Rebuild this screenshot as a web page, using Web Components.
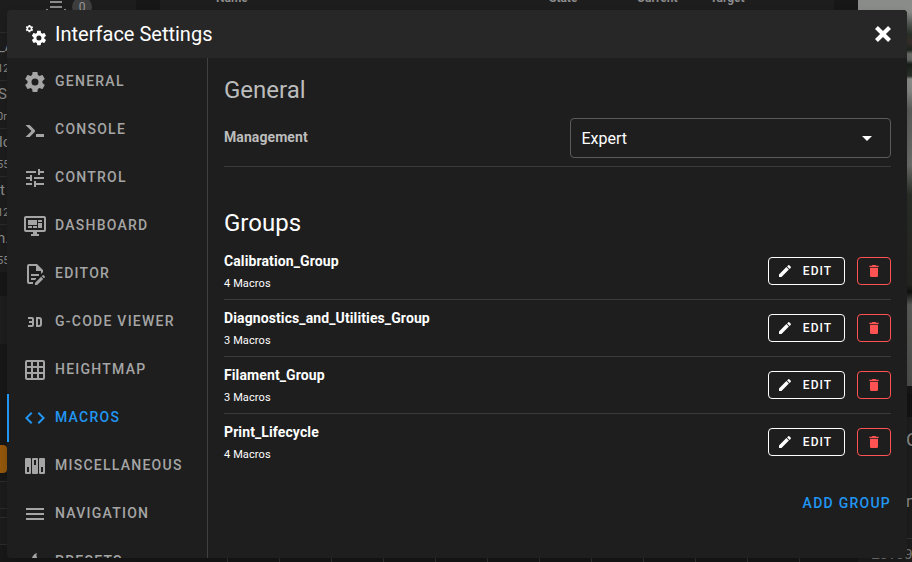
<!DOCTYPE html>
<html lang="en"><head><meta charset="utf-8"><title>Interface Settings</title>
<style>html,body{margin:0;width:912px;height:562px;overflow:hidden;background:#171717;font-family:Roboto,sans-serif}</style></head>
<body><settings-app></settings-app>
<script>
const ICONS={
cog:'M12,15.5A3.5,3.5 0 0,1 8.5,12A3.5,3.5 0 0,1 12,8.5A3.5,3.5 0 0,1 15.5,12A3.5,3.5 0 0,1 12,15.5M19.43,12.97C19.47,12.65 19.5,12.33 19.5,12C19.5,11.67 19.47,11.34 19.43,11L21.54,9.37C21.73,9.22 21.78,8.95 21.66,8.73L19.66,5.27C19.54,5.05 19.27,4.96 19.05,5.05L16.56,6.05C16.04,5.66 15.5,5.32 14.87,5.07L14.5,2.42C14.46,2.18 14.25,2 14,2H10C9.75,2 9.54,2.18 9.5,2.42L9.13,5.07C8.5,5.32 7.96,5.66 7.44,6.05L4.95,5.05C4.73,4.96 4.46,5.05 4.34,5.27L2.34,8.73C2.21,8.95 2.27,9.22 2.46,9.37L4.57,11C4.53,11.34 4.5,11.67 4.5,12C4.5,12.33 4.53,12.65 4.57,12.97L2.46,14.63C2.27,14.78 2.21,15.05 2.34,15.27L4.34,18.73C4.46,18.95 4.73,19.03 4.95,18.95L7.44,17.94C7.96,18.34 8.5,18.68 9.13,18.93L9.5,21.58C9.54,21.82 9.75,22 10,22H14C14.25,22 14.46,21.82 14.5,21.58L14.87,18.93C15.5,18.67 16.04,18.34 16.56,17.94L19.05,18.95C19.27,19.03 19.54,18.95 19.66,18.73L21.66,15.27C21.78,15.05 21.73,14.78 21.54,14.63L19.43,12.97Z',
console:'M13,19V16H21V19H13M8.5,13L2.47,7H6.71L11.67,11.95C12.25,12.54 12.25,13.5 11.67,14.07L6.74,19H2.5L8.5,13Z',
tune:'M3,17V19H9V17H3M3,5V7H13V5H3M13,21V19H21V17H13V15H11V21H13M7,9V11H3V13H7V15H9V9H7M21,13V11H11V13H21M15,9H17V7H21V5H17V3H15V9Z',
dashboard:'M21,16V4H3V16H21M21,2A2,2 0 0,1 23,4V16A2,2 0 0,1 21,18H14V20H16V22H8V20H10V18H3C1.89,18 1,17.1 1,16V4C1,2.89 1.89,2 3,2H21M5,6H14V11H5V6M15,6H19V8H15V6M19,9V14H15V9H19M5,12H9V14H5V12M10,12H14V14H10V12Z',
editor:'M8,12H16V14H8V12M10,20H6V4H13V9H18V12.1L20,10.1V8L14,2H6A2,2 0 0,0 4,4V20A2,2 0 0,0 6,22H10V20M8,18H12.1L13,17.1V16H8V18M20.2,13C20.3,13 20.5,13.1 20.6,13.2L21.9,14.5C22.1,14.7 22.1,15.1 21.9,15.3L20.9,16.3L18.8,14.2L19.8,13.2C19.9,13.1 20,13 20.2,13M20.2,16.9L14.1,23H12V20.9L18.1,14.8L20.2,16.9Z',
viewer:'M5,7H9A2,2 0 0,1 11,9V15A2,2 0 0,1 9,17H5V15H9V13H6V11H9V9H5V7M13,7H16A3,3 0 0,1 19,10V14A3,3 0 0,1 16,17H13V7M16,15A1,1 0 0,0 17,14V10A1,1 0 0,0 16,9H15V15H16Z',
grid:'M10,4V8H14V4H10M16,4V8H20V4H16M16,10V14H20V10H16M16,16V20H20V16H16M14,20V16H10V20H14M8,20V16H4V20H8M8,14V10H4V14H8M8,8V4H4V8H8M10,14H14V10H10V14M4,2H20A2,2 0 0,1 22,4V20A2,2 0 0,1 20,22H4C2.92,22 2,21.1 2,20V4A2,2 0 0,1 4,2Z',
code:'M14.6,16.6L19.2,12L14.6,7.4L16,6L22,12L16,18L14.6,16.6M9.4,16.6L4.8,12L9.4,7.4L8,6L2,12L8,18L9.4,16.6Z',
dip:'M3,4H7A1,1 0 0,1 8,5V19A1,1 0 0,1 7,20H3A1,1 0 0,1 2,19V5A1,1 0 0,1 3,4M4,13V18H6V13ZM10,4H14A1,1 0 0,1 15,5V19A1,1 0 0,1 14,20H10A1,1 0 0,1 9,19V5A1,1 0 0,1 10,4M11,6V11H13V6ZM17,4H21A1,1 0 0,1 22,5V19A1,1 0 0,1 21,20H17A1,1 0 0,1 16,19V5A1,1 0 0,1 17,4M18,13V18H20V13Z',
menu:'M3,6H21V8H3V6M3,11H21V13H3V11M3,16H21V18H3V16Z',
fire:'M17.66 11.2C17.43 10.9 17.15 10.64 16.89 10.38C16.22 9.78 15.46 9.35 14.82 8.72C13.33 7.26 13 4.85 13.95 3C13 3.23 12.17 3.75 11.46 4.32C8.87 6.4 7.85 10.07 9.07 13.22C6 17 10 21 14 20C18 19 19 14 17.66 11.2Z',
close:'M20 6.91L17.09 4L12 9.09L6.91 4L4 6.91L9.09 12L4 17.09L6.91 20L12 14.91L17.09 20L20 17.09L14.91 12L20 6.91Z',
pencil:'M20.71,7.04C21.1,6.65 21.1,6 20.71,5.63L18.37,3.29C18,2.9 17.35,2.9 16.96,3.29L15.12,5.12L18.87,8.87M3,17.25V21H6.75L17.81,9.93L14.06,6.18L3,17.25Z',
trash:'M19,4H15.5L14.5,3H9.5L8.5,4H5V6H19M6,19A2,2 0 0,0 8,21H16A2,2 0 0,0 18,19V7H6V19Z',
down:'M7,10L12,15L17,10H7Z',
list:'M7,6H19V8H7V6M7,11H19V13H7V11M7,15H19V17H7V15M3,14H5V16H3ZM21,14H23V16H21Z'};
function define(name,html){customElements.define(name,class extends HTMLElement{
 connectedCallback(){if(this.shadowRoot)return;this.attachShadow({mode:'open'}).innerHTML=typeof html==='function'?html(this):html;}});}

define('ui-icon',e=>{
 const s=e.getAttribute('size')||24,n=e.getAttribute('name');
 const body=n==='cogs'?`<g transform="translate(2 2.2) scale(.37)"><path d="${ICONS.cog}"/></g><g transform="translate(7.3 7.3) scale(.72)"><path d="${ICONS.cog}"/></g>`:`<path fill-rule="evenodd" d="${ICONS[n]}"/>`;
 return `<style>:host{display:block;flex:none;width:${s}px;height:${s}px}svg{display:block}</style><svg width="${s}" height="${s}" viewBox="0 0 24 24" fill="currentColor">${body}</svg>`;});

define('nav-item',e=>`<style>:host{display:flex;align-items:center;box-sizing:border-box;height:48px;padding-left:16px;gap:8px;color:#a5a5a5;font:500 14px/20px Roboto,sans-serif;letter-spacing:1.25px;white-space:nowrap}
:host([active]){color:#2196f3;box-shadow:inset 2px 0 #2196f3}span{margin-top:-2px}</style><ui-icon name="${e.getAttribute('icon')}"></ui-icon><span><slot></slot></span>`);

define('outline-button',`<style>:host{display:flex;box-sizing:border-box;align-items:center;justify-content:center;height:28px;padding:0 12px 0 9px;border:1px solid;border-radius:4px;gap:9px;font:500 12px/16px Roboto,sans-serif;letter-spacing:1.07px;color:#fff}:host([danger]){width:34px;padding:0;color:#ff5252}</style><slot></slot>`);

define('group-row',e=>`<style>:host{display:flex;box-sizing:border-box;height:57px;align-items:center;color:#fff;border-bottom:1px solid #3a3a3a}:host([last]){border-color:transparent}
.t{flex:1;display:flex;flex-direction:column;gap:5px}b{font:700 14px/20px Roboto;letter-spacing:.11px}small{font:400 11px/16px Roboto;letter-spacing:.11px}.a{display:flex;gap:12px}outline-button[e]{width:77px;box-sizing:border-box}ui-icon[name=pencil]{margin:0 1px 0 -1px}</style>
<div class="t"><b>${e.getAttribute('name')}</b><small><slot></slot></small></div><div class="a"><outline-button e><ui-icon name="pencil" size="16"></ui-icon><span>EDIT</span></outline-button><outline-button danger><ui-icon name="trash" size="16"></ui-icon></outline-button></div>`);

define('select-box',`<style>:host{display:flex;box-sizing:border-box;width:321px;height:40px;border:1px solid #5b5b5b;border-radius:4px;align-items:center;justify-content:space-between;padding:0 11px 0 10.5px;color:#fff;font:400 16px/20px Roboto;}span{padding-top:2px}</style><span><slot></slot></span><ui-icon name="down"></ui-icon>`);

define('page-backdrop',()=>{
 const rows=[['_A','12',-2],['S','0r',-2],['lo','55',-1],['t','12',0],['n.','55',-3]];
 return `<style>:host{display:grid;grid-template-columns:136px 674px 54px;column-gap:24px;width:912px;height:562px;overflow:hidden;color:#8c8c8c}
 .l,.c,.r{display:flex;flex-direction:column;overflow:hidden;height:562px}
 .top{height:32px;flex:none;background:#1d1d1d;display:flex;padding-left:43px;gap:2px;box-sizing:border-box}
 .top ui-icon{margin-top:-5px}.badge{width:20px;height:20px;border-radius:50%;background:#3e3e3e;color:#999;font:12px/20px Roboto;text-align:center;margin:-3px 0 0 3px}
 .row{height:48px;box-sizing:border-box;border-top:1px solid #2c2c2c;background:#1d1d1d;display:flex;flex-direction:column;white-space:nowrap;flex:none}
 .row b{font:400 15px/27px Roboto}.row i{font:normal 11px/18px Roboto}.lower{margin-top:24px;flex:1;background:linear-gradient(#1e1e1e 48px,#181818 48px)}
 .warn{margin-top:149px;height:28px;width:7px;background:#97590c;border-radius:0 4px 4px 0}
 .ticks{margin-top:8px;height:64px;background:linear-gradient(#2c2c2c,#2c2c2c) 0 0/100% 1px no-repeat,linear-gradient(#2c2c2c,#2c2c2c) 0 27px/100% 1px no-repeat,linear-gradient(#2c2c2c,#2c2c2c) 0 36px/100% 1px no-repeat,linear-gradient(#2c2c2c,#2c2c2c) 0 63px/100% 1px no-repeat,#1c1c1c}
 .head{display:grid;grid-template-columns:333px 88px 73px 1fr;padding-left:56px;height:558px;background:#1d1d1d;font:700 12px/14px Roboto;box-sizing:border-box}.head span{margin-top:-9px}
 .bottom{height:4px;background:repeating-linear-gradient(90deg,#171717 0 51px,#333 51px 52px) 16px 0}
 .cam{height:386px;flex:none;background:linear-gradient(#8a8c89 0,#8a8c89 12px,#555a55 24px,#2a332b 34px,#3a2f2a 42px,#1d271f 50px,#6f726e 54px,#666966 60px,#1a211b 64px,#2b332c 76px,#8f918e 79px,#8a8c89 90px,#5c5f5b 110px,#6c6f6b 165px,#2a2f28 195px,#242621 285px,#101210 292px,#5c5e5a 305px,#4d504c)}
 .gap{height:7px;flex:none}.info{height:154px;background:linear-gradient(#131313 24px,#1d1d1d 24px 106px,#333 106px 107px,#1d1d1d 107px 145px,#333 145px 146px,#1d1d1d 146px);flex:none;display:flex;flex-direction:column;padding-left:48px;font:19px/28px Roboto;box-sizing:border-box;padding-top:33px;gap:33px}.info i{font:normal 17px/28px Roboto}.time{padding-left:13px;font:15px/18px 'Liberation Mono',monospace;letter-spacing:-.8px;color:#777;background:#1d1d1d;flex:1}
 </style><div class="l"><div class="top"><ui-icon name="list"></ui-icon><div class="badge">0</div></div>
 ${rows.map(r=>`<div class="row"><b style="text-indent:${r[2]}px">${r[0]}</b><i style="text-indent:-3px">${r[1]}</i></div>`).join('')}
 <div class="lower"><div class="warn"></div><div class="ticks"></div></div></div>
 <div class="c"><div class="head"><span>Name</span><span>State</span><span>Current</span><span>Target</span></div><div class="bottom"></div></div>
 <div class="r"><div class="cam"></div><div class="gap"></div><div class="info"><span>C</span><i>n</i></div><div class="time">10:09</div></div>`;});

define('settings-dialog',`<style>:host{position:absolute;left:7px;top:10px;width:900px;height:548px;display:flex;flex-direction:column;border-radius:4px;overflow:hidden;background:#1e1e1e;box-shadow:0 6px 12px #0003;color:#fff}
header{height:48px;flex:none;background:#272727;display:flex;align-items:center;padding:0 12px 0 16px;gap:8px;box-sizing:border-box}h1{flex:1;margin:0;font:400 20px/32px Roboto}header ui-icon[name=cogs]{margin-left:-.5px;margin-right:.5px}
main{display:flex;flex:1;min-height:0}nav{width:200px;flex:none;border-right:1px solid #404040;overflow:hidden}
section{flex:1;padding:16px 16px 0;display:flex;flex-direction:column}h2{font:400 24px/32px Roboto;margin:0}h2.dim,.set label{color:#bcbcbc}
.set{display:flex;align-items:center;justify-content:space-between;height:61px;box-sizing:border-box;padding-top:4px;border-bottom:1px solid #3a3a3a}.set label{font:700 14px/20px Roboto;margin-top:-2px;letter-spacing:.08px}
.groups{margin-top:40px}.rows{margin-top:4px}.add{align-self:flex-end;margin-top:22px;font:500 14px/20px Roboto;letter-spacing:1.25px;color:#2196f3;white-space:nowrap}</style>
<header><ui-icon name="cogs"></ui-icon><h1>Interface Settings</h1><ui-icon name="close"></ui-icon></header>
<main><nav><nav-item icon="cog">GENERAL</nav-item><nav-item icon="console">CONSOLE</nav-item><nav-item icon="tune">CONTROL</nav-item><nav-item icon="dashboard">DASHBOARD</nav-item><nav-item icon="editor">EDITOR</nav-item><nav-item icon="viewer">G-CODE VIEWER</nav-item><nav-item icon="grid">HEIGHTMAP</nav-item><nav-item icon="code" active>MACROS</nav-item><nav-item icon="dip">MISCELLANEOUS</nav-item><nav-item icon="menu">NAVIGATION</nav-item><nav-item icon="fire">PRESETS</nav-item></nav>
<section><h2 class="dim">General</h2><div class="set"><label>Management</label><select-box>Expert</select-box></div>
<h2 class="groups">Groups</h2><div class="rows"><group-row name="Calibration_Group">4 Macros</group-row><group-row name="Diagnostics_and_Utilities_Group">3 Macros</group-row><group-row name="Filament_Group">3 Macros</group-row><group-row name="Print_Lifecycle" last>4 Macros</group-row></div><div class="add"><span>ADD GROUP</span></div></section></main>`);

define('settings-app',`<style>:host{display:block;position:relative;width:912px;height:562px;overflow:hidden}</style><page-backdrop></page-backdrop><settings-dialog></settings-dialog>`);
</script></body></html>
